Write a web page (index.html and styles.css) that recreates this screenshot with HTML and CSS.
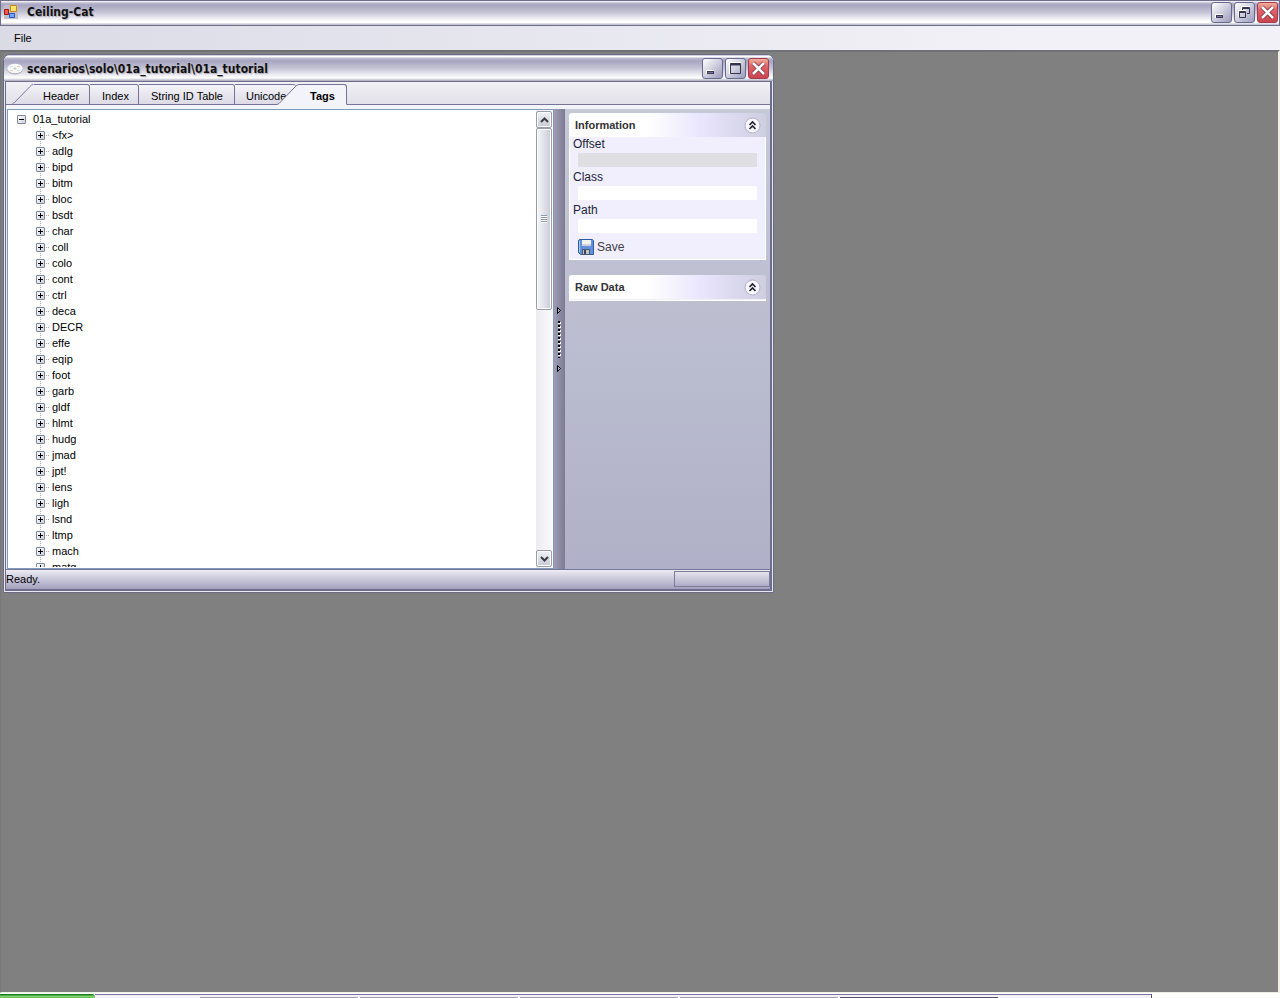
FILE: index.html
```html
<!DOCTYPE html>
<html lang="en">
<head>
<meta charset="utf-8">
<title>Ceiling-Cat</title>
<link rel="stylesheet" href="styles.css">
<script src="tree.js" defer></script>
</head>
<body>
<svg class="defs" width="0" height="0" aria-hidden="true">
  <defs>
    <linearGradient id="tabfill" x1="0" y1="0" x2="0" y2="1"><stop offset="0" stop-color="#f4f3f8"/><stop offset="1" stop-color="#dcdbe6"/></linearGradient>
    <symbol id="min" viewBox="1 1 19 19"><path d="M4 13h1v3h-1zM4 12h8v1h-8z" fill="#fff"/><path d="M5 13h7v3h-7z" fill="#3e3b5c"/><path d="M6 14h5v1h-5z" fill="#777493"/></symbol>
    <symbol id="max" viewBox="1 1 19 19"><path d="M4 4h12v1h-11v11h-1z" fill="#fff"/><path d="M5.500 5.500h10v10h-10zM5 6.500h11" fill="none" stroke="#36344d"/><path d="M6 7h9v1h-9z" fill="#8a88a5"/></symbol>
    <symbol id="restore" viewBox="1 1 19 19"><path d="M8.500 9V5.500h7v6H13M8 6.500h8" fill="none" stroke="#36344d"/><path d="M4 8h8v1h-7v6h-1zM7 4h9v1h-8v3h-1z" fill="#fff"/><path d="M5.500 9.500h6v6h-6zM5 10.500h7" fill="none" stroke="#36344d"/></symbol>
    <symbol id="close" viewBox="1 1 19 19"><path d="M5 5l11 11M16 5l-11 11" stroke="#7c2f3c" stroke-width="4"/><path d="M5 5l11 11M16 5l-11 11" stroke="#fff" stroke-width="2.600"/></symbol>
    <symbol id="chev" viewBox="0 0 17 17"><circle cx="8.500" cy="8.500" r="7.500" fill="#f8f7ff" stroke="#b2b0c8"/><path d="M5.500 8l3-3 3 3M5.500 12l3-3 3 3" fill="none" stroke="#22202f" stroke-width="1.600"/></symbol>
    <symbol id="slant" viewBox="0 0 22 21"><path d="M0 20.500L2 19.500L18 3Q20 .5 22 .5V21H0z" class="slant-fill"/><path d="M0 20.500L2 19.500L18 3Q20 .5 22 .5" fill="none" stroke="#77739a"/></symbol>
  </defs>
</svg>
<div class="app">
  <header class="titlebar">
    <svg class="app-icon" viewBox="0 0 16 16" aria-hidden="true"><path d="M1 1h14v14H1z" fill="#bdbcc8"/><path d="M1.500 5.500h4v5h-4z" fill="#ef5c45" stroke="#a51515"/><path d="M7.500 1.500h6v6h-6z" fill="#ffe071" stroke="#c68a0c"/><path d="M6.500 9.500h5v4h-5z" fill="#72a5ff" stroke="#2858c8"/></svg>
    <h1 class="title">Ceiling-Cat</h1>
    <div class="controls">
      <button class="win-btn" aria-label="Minimize"><svg><use href="#min"/></svg></button>
      <button class="win-btn" aria-label="Restore"><svg><use href="#restore"/></svg></button>
      <button class="win-btn win-close" aria-label="Close"><svg><use href="#close"/></svg></button>
    </div>
  </header>
  <nav class="menubar"><button class="menu">File</button></nav>
  <main class="workspace">
    <section class="child">
      <header class="child-title">
        <svg class="disc" viewBox="0 0 16 12" aria-hidden="true"><ellipse cx="8" cy="6.500" rx="7.700" ry="5" fill="#aaa9b5"/><ellipse cx="8" cy="5.500" rx="7.700" ry="4.800" fill="#f7f7f7"/><path d="M3 3h3v1H3zM10 7h3v1h-3z" fill="#c9e4e8"/><path d="M3 7h3v1H3zM10 3h3v1h-3z" fill="#f0c9c1"/><ellipse cx="8" cy="5.500" rx="1.500" ry="1" fill="#c7c6cf"/></svg>
        <h2 class="title">scenarios\solo\01a_tutorial\01a_tutorial</h2>
        <div class="controls">
          <button class="win-btn" aria-label="Minimize"><svg><use href="#min"/></svg></button>
          <button class="win-btn" aria-label="Maximize"><svg><use href="#max"/></svg></button>
          <button class="win-btn win-close" aria-label="Close"><svg><use href="#close"/></svg></button>
        </div>
      </header>
      <div class="client">
        <div class="tabs" role="tablist">
          <button class="tab tab-first" role="tab"><svg class="slant"><use href="#slant"/></svg><span class="tab-body">Header</span></button>
          <button class="tab" role="tab"><span class="tab-body">Index</span></button>
          <button class="tab" role="tab"><span class="tab-body">String ID Table</span></button>
          <button class="tab tab-last" role="tab"><span class="tab-body">Unicode</span></button>
          <button class="tab tab-active" role="tab" aria-selected="true"><svg class="slant"><use href="#slant"/></svg><span class="tab-body">Tags</span></button>
        </div>
        <div class="page">
          <div class="tree-pane">
            <div class="tree">
              <div class="root"><button class="toggle" aria-label="Collapse"></button><span>01a_tutorial</span></div>
              <ul class="nodes" id="nodes"></ul>
            </div>
            <div class="scrollbar">
              <button class="scroll-btn" aria-label="Scroll up"><svg viewBox="0 0 9 6"><path d="M1 5l3.500-3.500L8 5" fill="none" stroke="#3c3b44" stroke-width="2"/></svg></button>
              <div class="thumb"><span class="grip"></span></div>
              <button class="scroll-btn scroll-down" aria-label="Scroll down"><svg viewBox="0 0 9 6"><path d="M1 1l3.500 3.500L8 1" fill="none" stroke="#3c3b44" stroke-width="2"/></svg></button>
            </div>
          </div>
          <div class="splitter">
            <svg viewBox="0 0 5 7"><path d="M.5.5v6l3-3z" fill="#aaa8bd" stroke="#000"/></svg>
            <span class="dots"></span>
            <svg viewBox="0 0 5 7"><path d="M.5.5v6l3-3z" fill="#aaa8bd" stroke="#000"/></svg>
          </div>
          <aside class="side">
            <section class="card">
              <header class="card-head"><h3 class="card-title">Information</h3><button class="chev" aria-label="Collapse Information"><svg><use href="#chev"/></svg></button></header>
              <div class="card-body">
                <label class="label" for="offset">Offset</label><input class="field" id="offset" disabled>
                <label class="label" for="class">Class</label><input class="field" id="class">
                <label class="label" for="path">Path</label><input class="field" id="path">
                <button class="save"><svg viewBox="0 0 16 16" aria-hidden="true"><path d="M.5 1.500l1-1h13l1 1v14h-13l-2-2z" fill="#5f91dc" stroke="#2d5ba8"/><path d="M1.500 2v11" stroke="#a9c8f4"/><path d="M4 1h9v6H4z" fill="#f3f3f1"/><path d="M4 5h9v2H4z" fill="#cfd2d6"/><path d="M4 10h8v6H4z" fill="#4f5968"/><path d="M5 11h6v4H5z" fill="#bfc4c9"/><path d="M6 11h2v4H6z" fill="#37455e"/></svg><span>Save</span></button>
              </div>
            </section>
            <section class="card">
              <header class="card-head"><h3 class="card-title">Raw Data</h3><button class="chev" aria-label="Collapse Raw Data"><svg><use href="#chev"/></svg></button></header>
              <div class="card-body card-empty"></div>
            </section>
          </aside>
        </div>
        <footer class="status"><span>Ready.</span><span class="progress"></span></footer>
      </div>
    </section>
  </main>
  <footer class="taskbar"><div class="start"></div><div class="tasks"><i></i><i></i><i></i><i></i><i class="current"></i></div></footer>
</div>
</body>
</html>
```
FILE: styles.css
```css
* { box-sizing: border-box; }
body { margin: 0; font: 11px/16px "Liberation Sans", Arial, sans-serif; color: #000; overflow: hidden; }
button { font: inherit; color: inherit; border: 0; padding: 0; margin: 0; background: none; }
svg { display: block; }
.defs { position: absolute; }
.app { display: flex; flex-direction: column; height: 100vh; }

.titlebar, .child-title { display: flex; align-items: center; border: 1px solid #6f6d8b; }
.titlebar { height: 26px; padding: 0 1px 2px 2px; background: linear-gradient(#fff 0, #bcbbd0 2px, #a6a4c0 4px, #c4c3d4 11px, #fff 20px, #fff 22px, #c3c5d2 23px); }
.title { flex: 1; margin: 0; font: bold 12px/18px "DejaVu Sans Condensed", "Open Sans", sans-serif; text-shadow: 1px 1px 1px #aaa9b8; color: #111; white-space: nowrap; }
.app-icon { width: 16px; height: 16px; margin-right: 8px; }
.controls { display: flex; gap: 2px; }
.win-btn { width: 21px; height: 21px; border: 1px solid #67698f; border-radius: 3px; background: linear-gradient(135deg, #fff, #d8d8e5 40%, #9b9bbd); display: grid; place-items: center; }
.win-btn svg { width: 19px; height: 19px; }
.win-close { border-color: #a73a4a; background: linear-gradient(#f0b29c, #e0666a 35%, #c94450); }

.menubar { height: 24px; display: flex; align-items: center; padding: 0 14px; background: linear-gradient(90deg, #dbdbe6, #f2f1f7 80%); }
.workspace { flex: 1; min-height: 0; position: relative; background: #808080; border: solid; border-width: 2px 2px 1px 1px; border-color: #707077 #f1efe2 #f1efe2 #77777c; }

.child { position: absolute; left: 2px; top: 2px; width: 771px; height: 539px; display: flex; flex-direction: column; border: 1px solid #6a6987; border-radius: 7px 7px 0 0; background: #e9e8f2; padding: 0 1px 1px; }
.child-title { height: 26px; flex: none; margin: 0 -1px; padding: 2px 4px 0 3px; border: 0; border-bottom: 1px solid #b5b4c5; border-radius: 6px 6px 0 0; background: linear-gradient(#a6a4c0 0, #fff 1px, #fff 2px, #bcbbd0 3px, #a6a4c0 6px, #c4c3d4 13px, #fff 23px, #c3c5d2 25px); }
.disc { width: 16px; height: 12px; margin-right: 4px; }
.client { flex: 1; min-height: 0; display: flex; flex-direction: column; border: 1px solid #6f6d8b; border-right-width: 2px; border-bottom-width: 2px; }

.tabs { display: flex; align-items: flex-end; height: 23px; padding-left: 6px; flex: none; background: linear-gradient(#f1f0f5, #e2e1e9); border-bottom: 1px solid #77739a; }
.tab { display: flex; height: 21px; margin-bottom: -1px; text-align: left; }
.slant { width: 22px; height: 21px; flex: none; }
.tab-first .slant { border-bottom: 1px solid #77739a; }
.slant-fill { fill: var(--tab, url(#tabfill)); }
.tab-body { height: 21px; width: 49px; padding: 3px 0 0 12px; white-space: nowrap; border: 1px solid #77739a; border-left: 0; border-radius: 0 3px 0 0; background: linear-gradient(#f4f3f8, #dcdbe6); }
.tab-first .tab-body { width: 56px; padding-left: 9px; }
.tab:nth-child(3) .tab-body { width: 96px; }
.tab-last .tab-body { width: 61px; padding-left: 11px; border-right: 0; }
.tab-active { margin-left: -19px; font-weight: bold; }
.tab-active .slant { --tab: #f3f3fa; }
.tab-active .tab-body { width: 48px; background: #f3f3fa; border-bottom-color: #f3f3fa; padding-left: 11px; }

.page { flex: 1; min-height: 0; display: flex; border-top: 4px solid #f3f3fa; padding-left: 1px; }
.tree-pane { flex: 1; min-width: 0; display: flex; background: #fff; border: 1px solid #7f9db9; }
.tree { flex: 1; overflow: hidden; padding: 1px 0 0 9px; margin-bottom: 1px; }
.root { display: flex; align-items: center; height: 16px; gap: 7px; }
.nodes { list-style: none; margin: 0; padding: 0 0 0 19px; }
.node { display: flex; align-items: center; height: 16px; background: repeating-linear-gradient(#aaa 0 1px, transparent 1px 2px) 4px 0 / 1px 16px no-repeat; }
.node::before { content: ""; order: 1; width: 4px; height: 1px; margin-right: 3px; background: repeating-linear-gradient(90deg, transparent 0 1px, #aaa 1px 2px); }
.node span { order: 2; }
.toggle { width: 9px; height: 9px; border: 1px solid #7b8799; border-radius: 1px; flex: none; background: linear-gradient(#000, #000) center / 5px 1px no-repeat, linear-gradient(135deg, #fff, #cfcfdf); }
.node .toggle { background: linear-gradient(#000, #000) center / 5px 1px no-repeat, linear-gradient(#000, #000) center / 1px 5px no-repeat, linear-gradient(135deg, #fff, #cfcfdf); }

.scrollbar { width: 17px; display: flex; flex-direction: column; padding: 1px 0; background: linear-gradient(90deg, #ecebf0, #fbfbfd); }
.scroll-btn { width: 16px; height: 17px; flex: none; border: 1px solid #9c9cac; border-radius: 2px; box-shadow: inset 0 0 0 1px #fff; display: grid; place-items: center; background: linear-gradient(#f1f1f6, #c9cad8); }
.scroll-btn svg { width: 9px; height: 6px; }
.scroll-down { margin-top: auto; }
.thumb { width: 16px; height: 182px; border: 1px solid #9c9cac; border-radius: 2px; box-shadow: inset 0 0 0 1px #fff; display: grid; place-items: center; background: linear-gradient(90deg, #f7f7fa, #c9cad8); }
.grip { width: 6px; height: 8px; background: repeating-linear-gradient(#8d9aab 0 1px, #fff 1px 2px); }

.splitter { width: 11px; display: flex; flex-direction: column; align-items: center; justify-content: center; gap: 7px; background: linear-gradient(90deg, #9f9db5, #7d7b94); }
.splitter svg { width: 5px; height: 7px; }
.dots { width: 3px; height: 37px; background: repeating-linear-gradient(#000 0 2px, transparent 2px 4px) 0 0 / 2px 37px no-repeat, repeating-linear-gradient(transparent 0 1px, #fff 1px 3px, transparent 3px 4px); }

.side { width: 205px; padding: 4px 4px 0; background: linear-gradient(#c6c9d7, #b0b1c8); display: flex; flex-direction: column; gap: 15px; }
.card-head { height: 24px; display: flex; align-items: center; padding: 0 5px 0 6px; border-radius: 3px 3px 0 0; background: linear-gradient(90deg, #fff 40%, #e8e5fc 68%, #cfcde0); }
.card-title { flex: 1; margin: 0; font-size: 11px; line-height: 16px; color: #333; }
.chev, .chev svg { width: 17px; height: 17px; }
.card-body { border: 1px solid #fff; border-top: 0; background: #f1effd; padding: 0 8px 3px; }
.card-empty { padding: 0; height: 2px; }
.label { display: block; margin-left: -5px; height: 16px; font-size: 12px; line-height: 15px; color: #221f38; }
.field { display: block; width: 100%; height: 14px; margin: 0 0 3px; padding: 0 2px; border: 0; font: inherit; background: #fff; }
.field:disabled { background: #dfdee3; }
.save { display: flex; gap: 3px; margin-top: 6px; margin-bottom: 1px; color: #443e49; font-size: 12px; }
.save svg { width: 16px; height: 16px; }

.status { height: 20px; flex: none; display: flex; align-items: center; justify-content: space-between; border-top: 1px solid #77759a; background: linear-gradient(#edecf3, #a2a0bd); padding-bottom: 1px; }
.progress { width: 96px; height: 16px; border: 1px solid #7d7b98; }

.taskbar { height: 5px; flex: none; display: flex; background: #fff; overflow: hidden; padding-top: 1px; }
.start { width: 95px; background: linear-gradient(#187b1d 1px, #8ddc76 2px, #63bb4b); border-radius: 0 3px 0 0; }
.tasks { flex: none; width: 1057px; border-top: 1px solid #77749c; border-right: 1px solid #555; background: #f5f1fa; padding: 2px 0 0 105px; display: flex; gap: 2px; }
.tasks i { width: 158px; height: 1px; background: #a09da8; }
.tasks .current { background: #56525f; }
```
FILE: tree.js
```js
const tags = ["<fx>", "adlg", "bipd", "bitm", "bloc", "bsdt", "char", "coll", "colo", "cont", "ctrl", "deca", "DECR", "effe", "eqip", "foot", "garb", "gldf", "hlmt", "hudg", "jmad", "jpt!", "lens", "ligh", "lsnd", "ltmp", "mach", "matg"];
const list = document.getElementById("nodes");
for (const tag of tags) {
  const item = document.createElement("li");
  item.className = "node";
  const toggle = document.createElement("button");
  toggle.className = "toggle";
  toggle.setAttribute("aria-label", "Expand " + tag);
  const name = document.createElement("span");
  name.textContent = tag;
  item.append(toggle, name);
  list.append(item);
}
```
